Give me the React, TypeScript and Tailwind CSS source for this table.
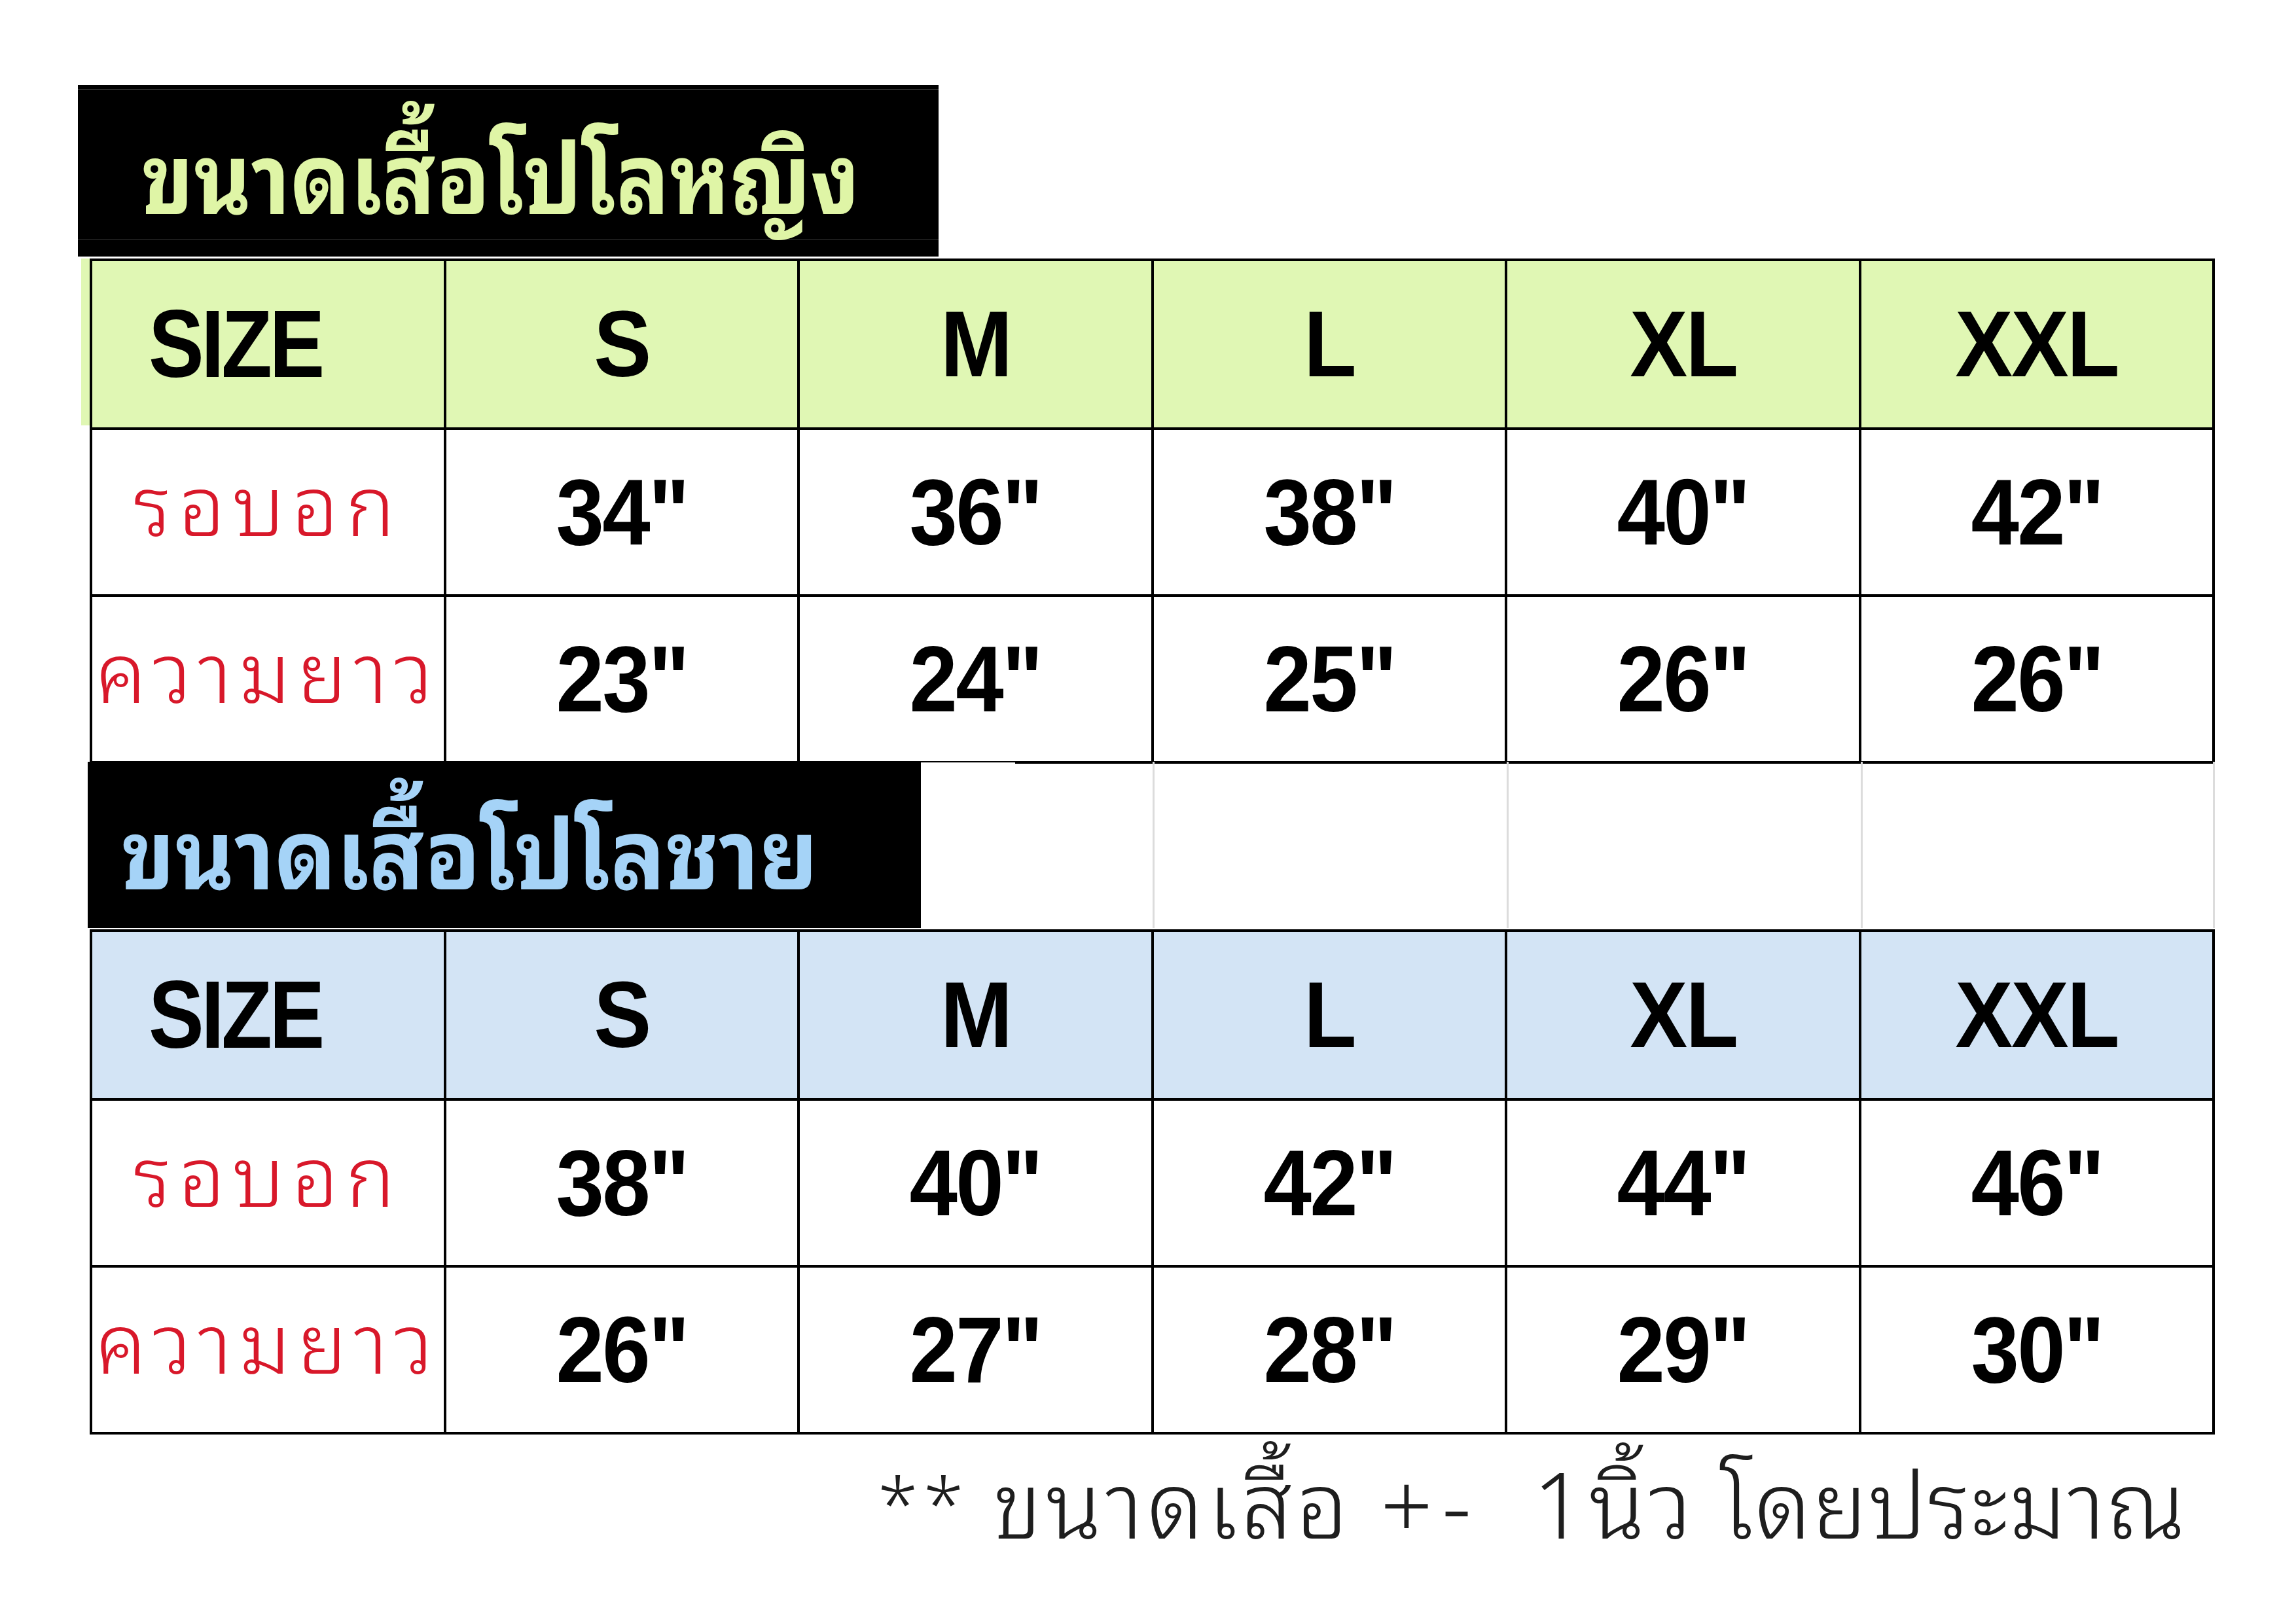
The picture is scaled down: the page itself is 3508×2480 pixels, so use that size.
const thaiFont =
  "font-['Noto_Sans_Thai_Looped','Noto_Sans_Thai','Loma','Garuda','Tlwg_Typo','Noto_Sans',sans-serif]";

const sizes = ['S', 'M', 'L', 'XL', 'XXL'];

const women = {
  chest: ['34"', '36"', '38"', '40"', '42"'],
  length: ['23"', '24"', '25"', '26"', '26"'],
};

const men = {
  chest: ['38"', '40"', '42"', '44"', '46"'],
  length: ['26"', '27"', '28"', '29"', '30"'],
};

const Latin = ({ children }: { children: string }) => (
  <span className="inline-block font-['Liberation_Sans',Arial,sans-serif] font-bold text-[142px] leading-none tracking-[-3px] text-black scale-x-[0.93]">
    {children}
  </span>
);

const Label = ({ children }: { children: string }) => (
  <span className={`${thaiFont} font-light text-[126px] leading-none tracking-[11px] text-[#d8182a] whitespace-nowrap`}>
    {children}
  </span>
);

const SizeTable = ({
  headBg,
  data,
}: {
  headBg: string;
  data: { chest: string[]; length: string[] };
}) => {
  return (
    <div className="w-[3247px] border-l-4 border-t-4 border-black grid grid-cols-6">
      <div className={`h-[258px] border-r-4 border-b-4 border-black ${headBg} flex items-center pl-[86px]`}>
        <span className="inline-block origin-left font-['Liberation_Sans',Arial,sans-serif] font-bold text-[146px] leading-none tracking-[-5px] text-black scale-x-[0.87]">
          SIZE
        </span>
      </div>
      {sizes.map((s) => (
        <div
          key={s}
          className={`h-[258px] border-r-4 border-b-4 border-black ${headBg} flex items-center justify-center`}
        >
          <Latin>{s}</Latin>
        </div>
      ))}

      <div className="h-[255px] border-r-4 border-b-4 border-black bg-white flex items-center justify-center pb-[42px]">
        <Label>รอบอก</Label>
      </div>
      {data.chest.map((v, i) => (
        <div
          key={'c' + i}
          className="h-[255px] border-r-4 border-b-4 border-black bg-white flex items-center justify-center"
        >
          <Latin>{v}</Latin>
        </div>
      ))}

      <div className="h-[255px] border-r-4 border-b-4 border-black bg-white flex items-center justify-center pb-[42px]">
        <Label>ความยาว</Label>
      </div>
      {data.length.map((v, i) => (
        <div
          key={'l' + i}
          className="h-[255px] border-r-4 border-b-4 border-black bg-white flex items-center justify-center"
        >
          <Latin>{v}</Latin>
        </div>
      ))}
    </div>
  );
};

const App = () => {
  return (
    <div className="w-[3508px] h-[2480px] bg-white flex flex-col overflow-hidden">
      {/* women title */}
      <div className="ml-[119px] mt-[130px] w-[1315px] h-[262px] bg-black pt-[6px] pb-[25px]">
        <div className="h-full border-y border-[#3c3c3c] flex items-center pl-[97px] pt-[16px]">
          <span className={`${thaiFont} inline-block origin-left scale-x-[0.9] font-bold text-[150px] leading-none text-[#dff5a6] whitespace-nowrap`}>
            ขนาดเสื้อโปโลหญิง
          </span>
        </div>
      </div>

      <div className="mt-[3px] ml-[124px] flex items-start">
        <div className="w-[13px] h-[255px] bg-[#e0f7b4]" />
        <SizeTable headBg="bg-[#e0f7b4]" data={women} />
      </div>

      {/* men title + faint grid, sits over the table's bottom line */}
      <div className="flex h-[254px] -mt-[3px]">
        <div className="ml-[134px] w-[1273px] h-full bg-black flex items-center pl-[51px] pt-[4px]">
          <span className={`${thaiFont} inline-block origin-left scale-x-[0.94] font-bold text-[148px] leading-none text-[#a5d3f7] whitespace-nowrap`}>
            ขนาดเสื้อโปโลชาย
          </span>
        </div>
        <div className="w-[144px] mt-[1px] bg-white" />
        <div className="w-[210px]" />
        <div className="w-[541px] border-l-[3px] border-[#dcdcdc]" />
        <div className="w-[541px] border-l-[3px] border-[#dcdcdc]" />
        <div className="w-[541px] border-x-[3px] border-[#dcdcdc]" />
      </div>

      <div className="ml-[137px] mt-[2px]">
        <SizeTable headBg="bg-[#d3e4f5]" data={men} />
      </div>

      <div
        className={`${thaiFont} font-light flex items-baseline ml-[1341px] mt-[26px] text-[140px] leading-none text-[#1e1e1e] whitespace-nowrap`}
      >
        <span className="w-[176px] text-[112px] tracking-[8px] -translate-y-[12px]">**</span>
        <span className="w-[592px] tracking-[6px]">ขนาดเสื้อ</span>
        <span className="w-[233px] tracking-[14px]">+-</span>
        <span className="w-[286px] tracking-[6px]">1นิ้ว</span>
        <span className="tracking-[2px]">โดยประมาณ</span>
      </div>
    </div>
  );
};

export default App;
